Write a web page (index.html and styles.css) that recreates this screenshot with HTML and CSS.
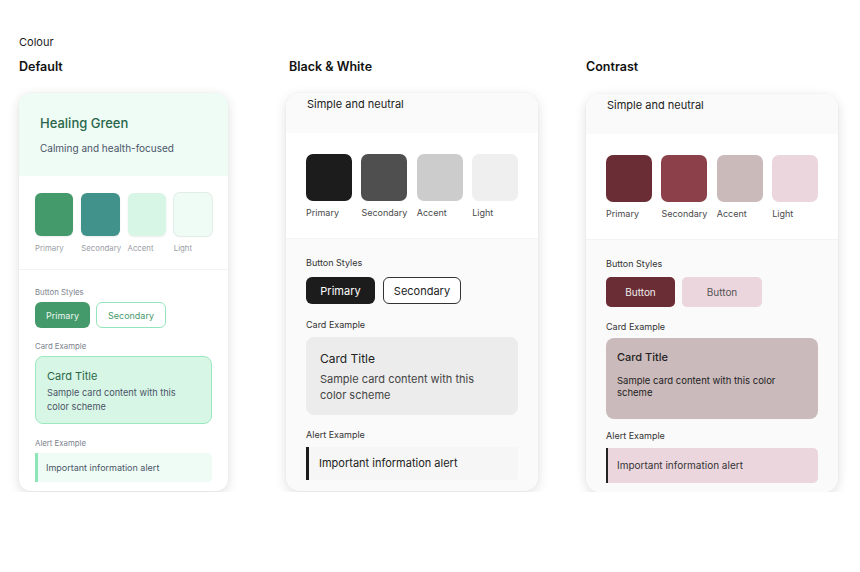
FILE: index.html
```html
<!DOCTYPE html>
<html lang="en">
<head>
<meta charset="utf-8">
<title>Colour</title>
<link rel="stylesheet" href="styles.css">
</head>
<body>
<div class="page">
  <div class="page-label">Colour</div>
  <div class="columns">
    <!-- Default -->
    <section class="column">
      <h2 class="col-title">Default</h2>
      <div class="card theme-green">
        <div class="card-head">
          <div class="head-title">Healing Green</div>
          <div class="head-sub">Calming and health-focused</div>
        </div>
        <div class="swatch-section">
          <div class="swatches">
            <div class="swatch-item"><div class="swatch sw-1"></div><div class="sw-label">Primary</div></div>
            <div class="swatch-item"><div class="swatch sw-2"></div><div class="sw-label">Secondary</div></div>
            <div class="swatch-item"><div class="swatch sw-3"></div><div class="sw-label">Accent</div></div>
            <div class="swatch-item"><div class="swatch sw-4"></div><div class="sw-label">Light</div></div>
          </div>
        </div>
        <div class="body-section">
          <div class="sec-label">Button Styles</div>
          <div class="buttons">
            <button class="btn btn-primary">Primary</button>
            <button class="btn btn-secondary">Secondary</button>
          </div>
          <div class="sec-label lbl-card">Card Example</div>
          <div class="demo-card">
            <div class="demo-title">Card Title</div>
            <div class="demo-text">Sample card content with this color scheme</div>
          </div>
          <div class="sec-label lbl-alert">Alert Example</div>
          <div class="alert">Important information alert</div>
        </div>
      </div>
    </section>

    <!-- Black & White -->
    <section class="column">
      <h2 class="col-title col-title-bw">Black &amp; White</h2>
      <div class="card theme-bw">
        <div class="card-head">
          <div class="head-sub">Simple and neutral</div>
        </div>
        <div class="swatch-section">
          <div class="swatches">
            <div class="swatch-item"><div class="swatch sw-1"></div><div class="sw-label">Primary</div></div>
            <div class="swatch-item"><div class="swatch sw-2"></div><div class="sw-label">Secondary</div></div>
            <div class="swatch-item"><div class="swatch sw-3"></div><div class="sw-label">Accent</div></div>
            <div class="swatch-item"><div class="swatch sw-4"></div><div class="sw-label">Light</div></div>
          </div>
        </div>
        <div class="body-section">
          <div class="sec-label">Button Styles</div>
          <div class="buttons">
            <button class="btn btn-primary">Primary</button>
            <button class="btn btn-secondary">Secondary</button>
          </div>
          <div class="sec-label lbl-card">Card Example</div>
          <div class="demo-card">
            <div class="demo-title">Card Title</div>
            <div class="demo-text">Sample card content with this color scheme</div>
          </div>
          <div class="sec-label lbl-alert">Alert Example</div>
          <div class="alert">Important information alert</div>
        </div>
      </div>
    </section>

    <!-- Contrast -->
    <section class="column">
      <h2 class="col-title">Contrast</h2>
      <div class="card theme-contrast">
        <div class="card-head">
          <div class="head-sub">Simple and neutral</div>
        </div>
        <div class="swatch-section">
          <div class="swatches">
            <div class="swatch-item"><div class="swatch sw-1"></div><div class="sw-label">Primary</div></div>
            <div class="swatch-item"><div class="swatch sw-2"></div><div class="sw-label">Secondary</div></div>
            <div class="swatch-item"><div class="swatch sw-3"></div><div class="sw-label">Accent</div></div>
            <div class="swatch-item"><div class="swatch sw-4"></div><div class="sw-label">Light</div></div>
          </div>
        </div>
        <div class="body-section">
          <div class="sec-label">Button Styles</div>
          <div class="buttons">
            <button class="btn btn-primary">Button</button>
            <button class="btn btn-secondary">Button</button>
          </div>
          <div class="sec-label lbl-card">Card Example</div>
          <div class="demo-card">
            <div class="demo-title">Card Title</div>
            <div class="demo-text">Sample card content with this color scheme</div>
          </div>
          <div class="sec-label lbl-alert">Alert Example</div>
          <div class="alert">Important information alert</div>
        </div>
      </div>
    </section>
  </div>
</div>
</body>
</html>
```

FILE: styles.css
```css
* { box-sizing: border-box; }
html, body { margin: 0; padding: 0; background: #ffffff; }
body {
  font-family: Inter, "Noto Sans", "Liberation Sans", sans-serif;
  color: #111;
  -webkit-font-smoothing: antialiased;
}
.page { padding: 35px 0 0 19px; }
.page-label { font-size: 11px; line-height: 14px; color: #1a1a1a; }
.columns {
  display: grid;
  grid-template-columns: 219px 252px 252px;
  column-gap: 48px;
  margin-top: 10px;
  align-items: start;
}
.column { display: flex; flex-direction: column; }
.col-title {
  margin: 0 0 18px 0;
  font-size: 12.5px;
  line-height: 16px;
  font-weight: 600;
  color: #111;
}
.col-title-bw { padding-left: 3px; }

.card {
  background: #ffffff;
  border-radius: 12px;
  box-shadow: 0 3px 12px rgba(0, 0, 0, 0.13), 0 0 2px rgba(0, 0, 0, 0.05);
  overflow: hidden;
  height: 398px;
  display: flex;
  flex-direction: column;
}
.swatches { display: grid; grid-template-columns: repeat(4, 1fr); }
.swatch-item { display: flex; flex-direction: column; min-width: 0; }
.sw-label { white-space: nowrap; }
.btn { font-family: inherit; cursor: pointer; display: inline-flex; align-items: center; justify-content: center; }
.buttons { display: flex; }
.body-section { flex: 1; }

/* ---------- Green ---------- */
.theme-green { width: 209px; }
.theme-green .card-head { background: #effbf5; padding: 22px 21px 21px; height: 83px; }
.theme-green .head-title { font-size: 13px; line-height: 17px; font-weight: 500; color: #28664a; }
.theme-green .head-sub { margin-top: 9px; font-size: 10px; line-height: 14px; color: #4a5568; }
.theme-green .swatch-section { padding: 17px 16px 16px; border-bottom: 1px solid #f2f3f3; }
.theme-green .swatches { column-gap: 8px; }
.theme-green .swatch { height: 43px; border-radius: 6px; box-shadow: 0 1px 2px rgba(0,0,0,0.08); }
.theme-green .sw-1 { background: #459a6b; }
.theme-green .sw-2 { background: #41928a; }
.theme-green .sw-3 { background: #d8f6e5; }
.theme-green .sw-4 { background: #effcf5; box-shadow: 0 0 0 1px #e4ece8, 0 1px 2px rgba(0,0,0,0.06); }
.theme-green .sw-label { margin-top: 7px; font-size: 7.8px; line-height: 10px; color: #9a9ea6; }
.theme-green .body-section { padding: 17px 16px 10px; }
.theme-green .sec-label { font-size: 7.8px; line-height: 10px; color: #7d838e; }
.theme-green .buttons { margin-top: 5px; gap: 6px; }
.theme-green .btn { height: 26px; border-radius: 6px; font-size: 9px; }
.theme-green .btn-primary { width: 55px; background: #459a6b; color: #e9f7ef; border: none; }
.theme-green .btn-secondary { width: 70px; background: #fff; color: #459a6b; border: 1.5px solid #93e6bb; }
.theme-green .lbl-card { margin-top: 13px; }
.theme-green .demo-card { margin-top: 5px; height: 68px; background: #d8f6e5; border: 1px solid #9ae8bf; border-radius: 8px; padding: 12px 11px 9px; }
.theme-green .demo-title { font-size: 11px; line-height: 14px; color: #28664a; }
.theme-green .demo-text { margin-top: 3px; font-size: 9.2px; line-height: 14px; color: #4a5568; padding-right: 18px; }
.theme-green .lbl-alert { margin-top: 14px; }
.theme-green .alert { margin-top: 5px; height: 29px; background: #effcf5; border-left: 3px solid #8ee6b8; border-radius: 0 4px 4px 0; padding: 8px 8px; font-size: 9px; line-height: 13px; color: #4a5568; }

/* ---------- Black & White ---------- */
.theme-bw { width: 252px; border-radius: 14px; }
.theme-bw .card-head, .theme-contrast .card-head { background: #fafafa; padding: 4px 21px 0; height: 40px; }
.theme-bw .head-sub, .theme-contrast .head-sub { font-size: 11px; line-height: 14px; color: #222; }
.theme-bw .swatch-section, .theme-contrast .swatch-section { padding: 21px 20px 19px; border-bottom: 1px solid #f3f3f3; background: #ffffff; }
.theme-bw .swatches, .theme-contrast .swatches { column-gap: 9.5px; }
.theme-bw .swatch, .theme-contrast .swatch { height: 47px; border-radius: 7px; }
.theme-bw .sw-1 { background: #1c1c1c; }
.theme-bw .sw-2 { background: #4f4f4f; }
.theme-bw .sw-3 { background: #cccccc; }
.theme-bw .sw-4 { background: #efefef; }
.theme-bw .sw-label, .theme-contrast .sw-label { margin-top: 6px; font-size: 9px; line-height: 12px; color: #4a4a4a; }
.theme-bw .body-section { background: #fafafa; padding: 18px 20px 11px; }
.theme-bw .sec-label, .theme-contrast .sec-label { font-size: 9px; line-height: 12px; color: #333; }
.theme-bw .buttons { margin-top: 8px; gap: 8px; }
.theme-bw .btn { height: 27px; border-radius: 6px; font-size: 11px; }
.theme-bw .btn-primary { width: 69px; background: #1c1c1c; color: #fff; border: none; }
.theme-bw .btn-secondary { width: 78px; background: #fff; color: #222; border: 1px solid #333; }
.theme-bw .lbl-card { margin-top: 15px; }
.theme-bw .demo-card { margin-top: 6px; height: 78px; background: #ececec; border-radius: 8px; padding: 14px 14px 12px; }
.theme-bw .demo-title { font-size: 12px; line-height: 16px; color: #222; }
.theme-bw .demo-text { margin-top: 4px; font-size: 11px; line-height: 16px; color: #444; padding-right: 20px; }
.theme-bw .lbl-alert { margin-top: 14px; }
.theme-bw .alert { margin-top: 6px; height: 33px; background: #f6f6f6; border-left: 3px solid #1c1c1c; border-radius: 0 4px 4px 0; padding: 9px 10px; font-size: 11px; line-height: 15px; color: #222; }

/* ---------- Contrast ---------- */
.theme-contrast { width: 252px; border-radius: 14px; margin-top: 1px; }
.theme-contrast .sw-1 { background: #6b2d35; }
.theme-contrast .sw-2 { background: #8b404a; }
.theme-contrast .sw-3 { background: #cbbaba; }
.theme-contrast .sw-4 { background: #ecd6de; }
.theme-contrast .body-section { background: #fafafa; padding: 18px 20px 9px; }
.theme-contrast .buttons { margin-top: 7px; gap: 7px; }
.theme-contrast .btn { height: 30px; border-radius: 5px; font-size: 10px; border: none; }
.theme-contrast .btn-primary { width: 69px; background: #6b2d35; color: #eee; }
.theme-contrast .btn-secondary { width: 80px; background: #ecd6de; color: #555; }
.theme-contrast .lbl-card { margin-top: 14px; }
.theme-contrast .demo-card { margin-top: 5px; height: 81px; background: #cbbabb; border-radius: 8px; padding: 12px 11px 20px; }
.theme-contrast .demo-title { font-size: 11px; line-height: 14px; font-weight: 500; color: #1f1f1f; }
.theme-contrast .demo-text { margin-top: 11px; font-size: 9.5px; line-height: 12px; color: #222; padding-right: 10px; }
.theme-contrast .lbl-alert { margin-top: 11px; }
.theme-contrast .alert { margin-top: 6px; height: 35px; background: #ecd6de; border-left: 2px solid #222; border-radius: 0 5px 5px 0; padding: 10px 9px; font-size: 10px; line-height: 15px; color: #333; }
```
